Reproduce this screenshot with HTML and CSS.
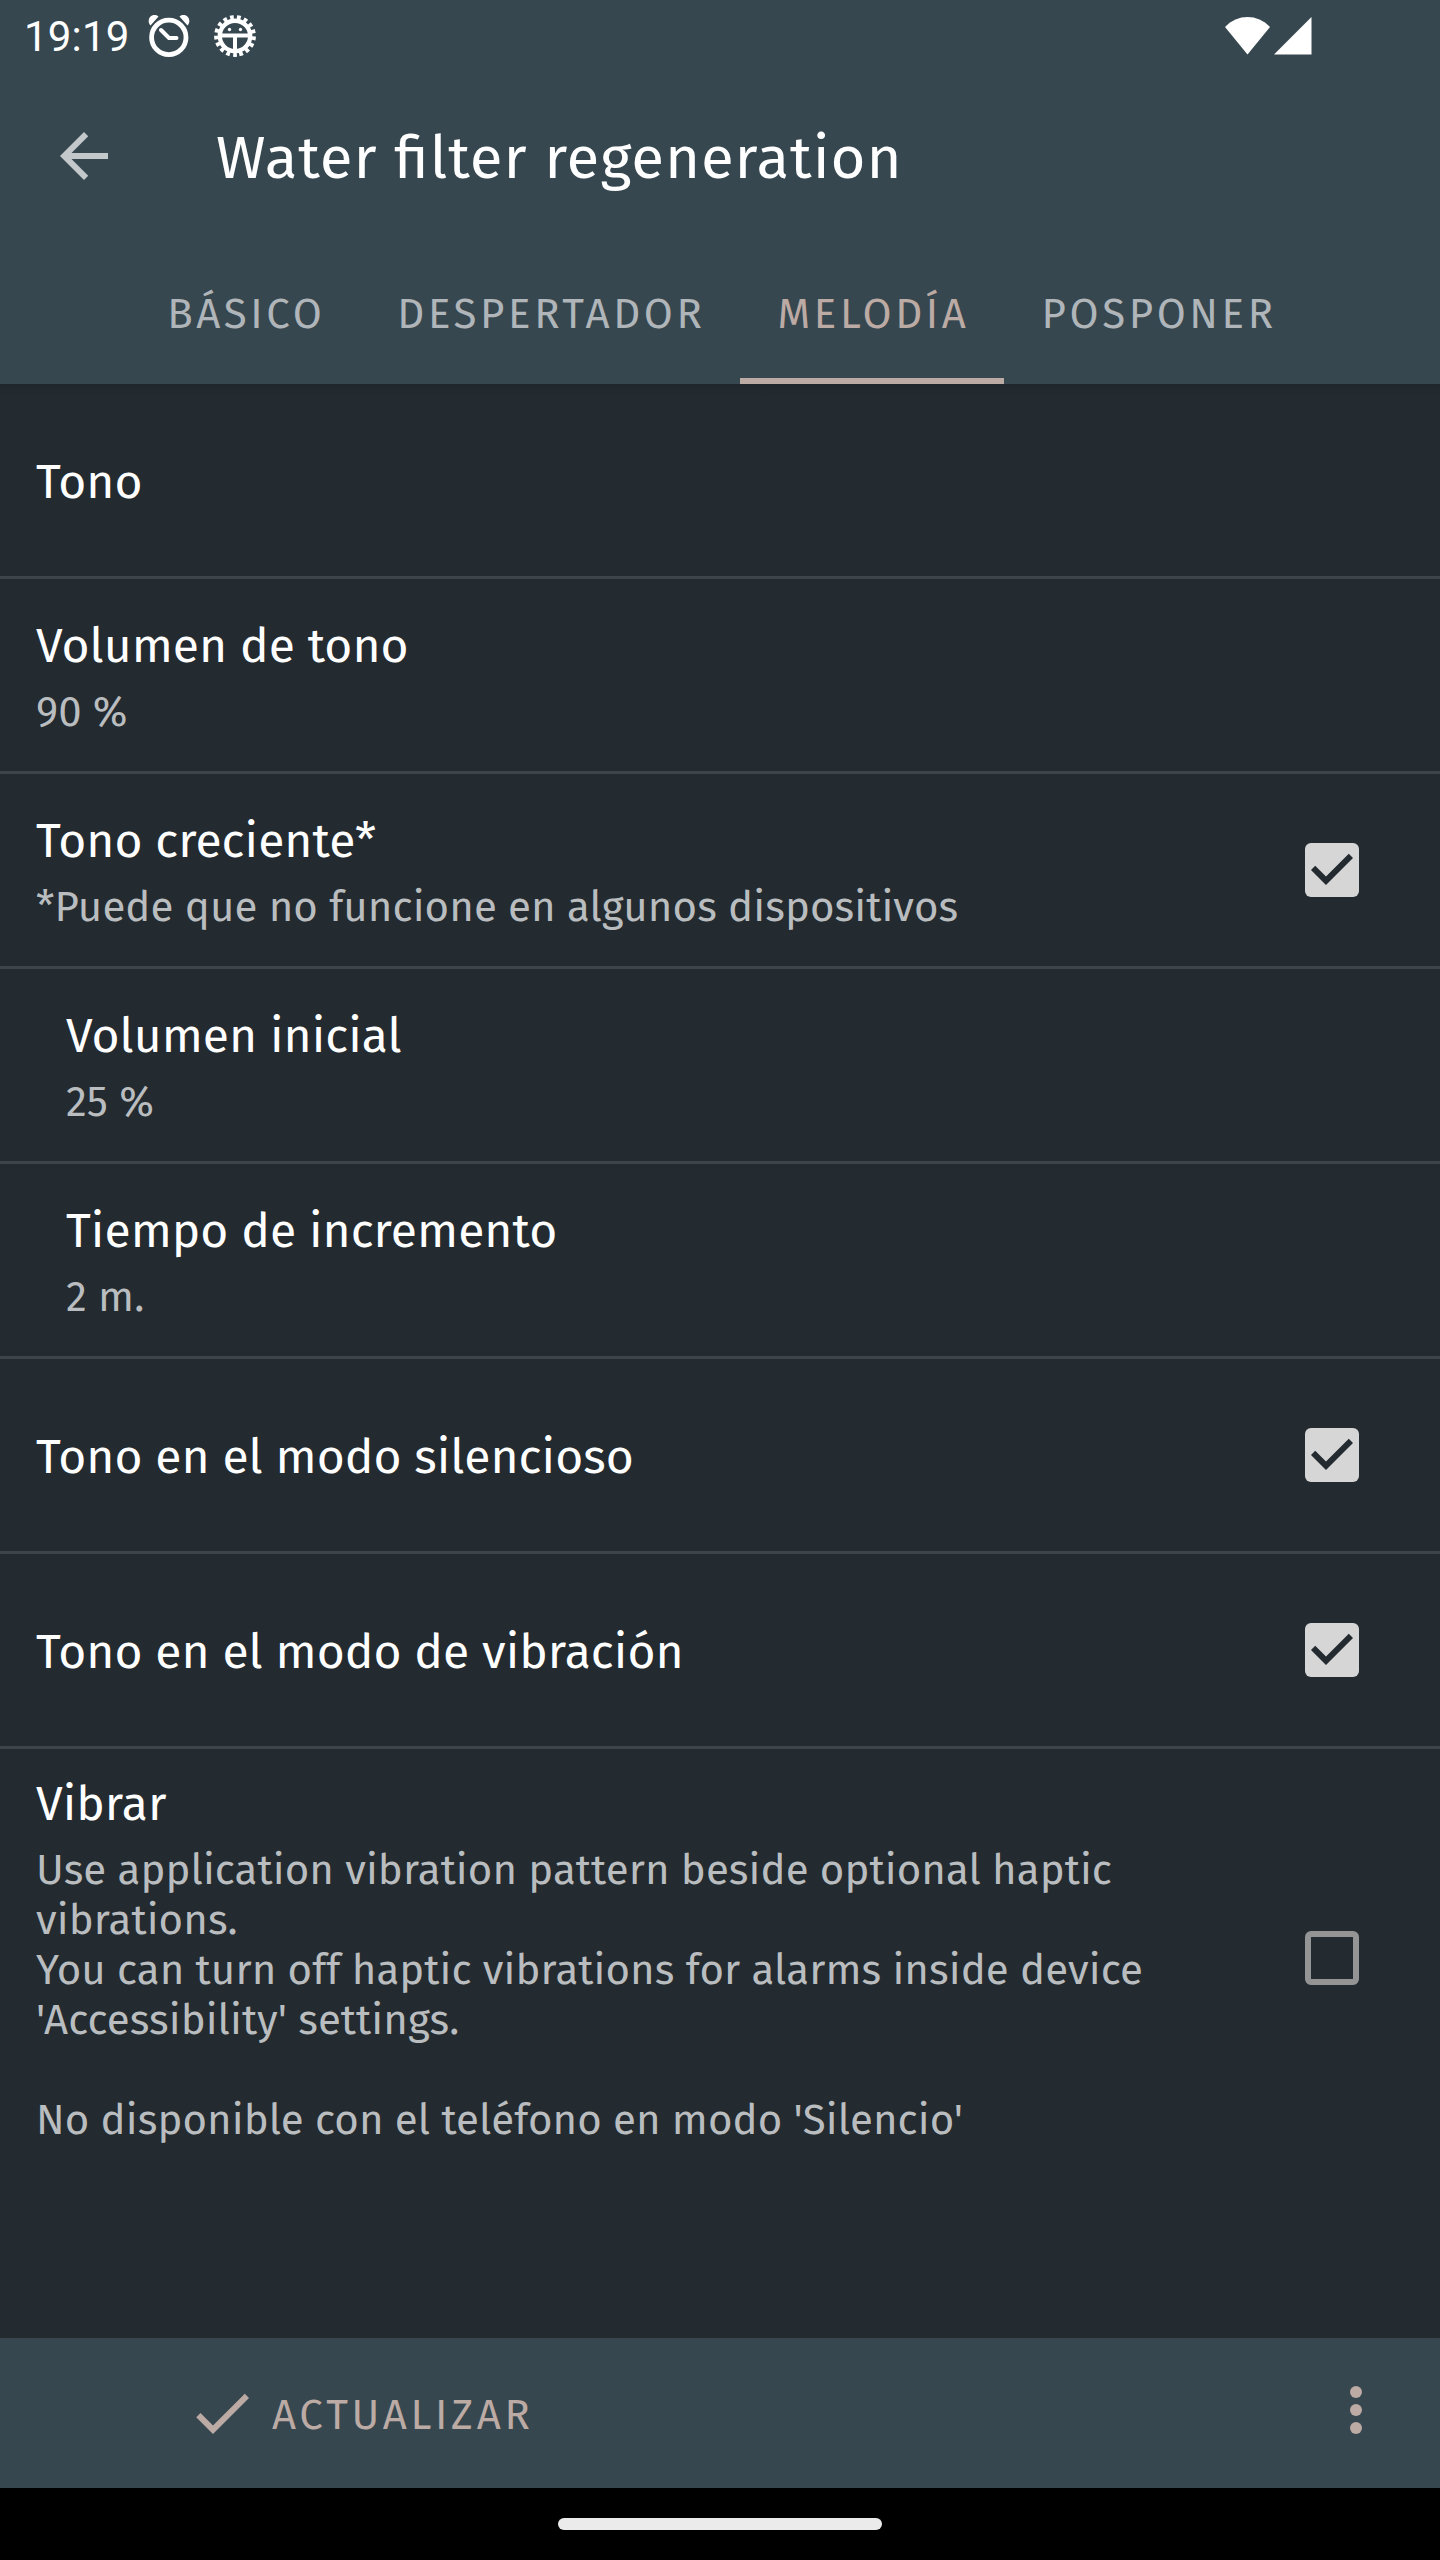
FILE: index.html
```html
<!DOCTYPE html>
<html lang="es">
<head>
    <meta charset="UTF-8">
    <meta name="viewport" content="width=device-width, initial-scale=1.0">
    <title>Water filter regeneration</title>
    <link rel="stylesheet" href="styles.css">
</head>
<body>

<div class="screen">
    <header class="header">
        <div class="status-bar">
            <span class="clock">19:19</span>
            <svg class="status-icon" width="42" height="42" viewBox="0 0 42 42" fill="none" stroke="#fff">
                <circle cx="20.800" cy="22.400" r="17.200" stroke-width="4.800"/>
                <path d="M13 15l8 8h7.500" stroke-width="4" stroke-linecap="round"/>
                <path d="M2.500 10.500C-3 4 5-3.500 10.500 1.500Q7 5.500 2.500 10.500zM39.500 10.500C45 4 37-3.500 31.500 1.500Q35 5.500 39.500 10.500z" fill="#fff" stroke="none"/>
            </svg>
            <svg class="status-icon gear" width="42" height="42" viewBox="-21 -21 42 42" fill="none" stroke="#fff">
                <circle r="15.200" stroke-width="4.400"/>
                <circle r="18.600" stroke-width="4.600" stroke-dasharray="3.700 3.175" transform="rotate(84.300)"/>
                <path d="M-14-.500h28M0-.500v16" stroke-width="4"/>
                <circle cx="-5.500" cy="-6.500" r="1.700" fill="#fff" stroke="none"/>
                <circle cx="5.500" cy="-6.500" r="1.700" fill="#fff" stroke="none"/>
            </svg>
            <svg class="signal" width="87" height="38" viewBox="0 0 87 38" fill="#fff">
                <path d="M0 10C12.500-3.300 32.500-3.300 45 10L22.500 37.500z"/>
                <path d="M49 37.500L86.500 0V37.500z"/>
            </svg>
        </div>
        <div class="toolbar">
            <svg class="back" width="72" height="72" viewBox="0 0 24 24" fill="#c3c8ca">
                <path d="M20 11H7.830l5.590-5.590L12 4l-8 8 8 8 1.410-1.410L7.830 13H20v-2z"/>
            </svg>
            <h1>Water filter regeneration</h1>
        </div>
        <nav class="tabs">
            <a class="tab">BÁSICO</a>
            <a class="tab">DESPERTADOR</a>
            <a class="tab active">MELODÍA</a>
            <a class="tab">POSPONER</a>
        </nav>
    </header>

    <main class="list">
        <div class="row">
            <div class="text"><h2>Tono</h2></div>
        </div>
        <div class="row">
            <div class="text"><h2>Volumen de tono</h2><p>90 %</p></div>
        </div>
        <div class="row">
            <div class="text"><h2>Tono creciente*</h2><p>*Puede que no funcione en algunos dispositivos</p></div>
            <svg class="checkbox" width="54" height="54" viewBox="3 3 18 18">
                <rect x="3" y="3" width="18" height="18" rx="2" fill="#d6d6d6"/>
                <path d="M10 17l-5-5 1.410-1.410L10 14.170l7.590-7.590L19 8z" fill="#232b30"/>
            </svg>
        </div>
        <div class="row indent">
            <div class="text"><h2>Volumen inicial</h2><p>25 %</p></div>
        </div>
        <div class="row indent">
            <div class="text"><h2>Tiempo de incremento</h2><p>2 m.</p></div>
        </div>
        <div class="row">
            <div class="text"><h2>Tono en el modo silencioso</h2></div>
            <svg class="checkbox" width="54" height="54" viewBox="3 3 18 18">
                <rect x="3" y="3" width="18" height="18" rx="2" fill="#d6d6d6"/>
                <path d="M10 17l-5-5 1.410-1.410L10 14.170l7.590-7.590L19 8z" fill="#232b30"/>
            </svg>
        </div>
        <div class="row">
            <div class="text"><h2>Tono en el modo de vibración</h2></div>
            <svg class="checkbox" width="54" height="54" viewBox="3 3 18 18">
                <rect x="3" y="3" width="18" height="18" rx="2" fill="#d6d6d6"/>
                <path d="M10 17l-5-5 1.410-1.410L10 14.170l7.590-7.590L19 8z" fill="#232b30"/>
            </svg>
        </div>
        <div class="row tall">
            <div class="text">
                <h2>Vibrar</h2>
                <p>Use application vibration pattern beside optional haptic<br>vibrations.<br>You can turn off haptic vibrations for alarms inside device<br>'Accessibility' settings.<br><br>No disponible con el teléfono en modo 'Silencio'</p>
            </div>
            <svg class="checkbox" width="54" height="54" viewBox="3 3 18 18">
                <rect x="4" y="4" width="16" height="16" rx="1" fill="none" stroke="#949494" stroke-width="2"/>
            </svg>
        </div>
    </main>

    <footer class="bottom-bar">
        <button class="update">
            <svg width="72" height="72" viewBox="0 0 24 24" fill="#bcaaa4">
                <path d="M9 16.170L4.830 12l-1.420 1.410L9 19 21 7l-1.410-1.410z"/>
            </svg>
            <span>ACTUALIZAR</span>
        </button>
        <svg class="more" width="72" height="72" viewBox="0 0 24 24" fill="#bcaaa4">
            <circle cx="12" cy="6" r="2"/>
            <circle cx="12" cy="12" r="2"/>
            <circle cx="12" cy="18" r="2"/>
        </svg>
    </footer>
    <div class="nav-bar"><div class="pill"></div></div>
</div>

</body>
</html>
```
FILE: styles.css
```css
* {
    box-sizing: border-box;
}
body {
    margin: 0;
    background-color: #000;
    font-family: "Fira Sans", "Noto Sans", sans-serif;
}
h1, h2, p {
    margin: 0;
    font-weight: normal;
    font-feature-settings: "liga";
    white-space: nowrap;
}
svg {
    display: block;
    flex: none;
}
.screen {
    width: 1440px;
    height: 2560px;
    display: flex;
    flex-direction: column;
    background-color: #232b30;
    overflow: hidden;
}
.header {
    height: 384px;
    background-color: #37474f;
}
.status-bar {
    height: 72px;
    display: flex;
    align-items: center;
    padding: 0 128px 0 24px;
    color: #fff;
}
.clock {
    width: 124px;
    font-family: Roboto, sans-serif;
    font-size: 42px;
    line-height: 50px;
    letter-spacing: 0.2px;
    padding-top: 2px;
}
.gear {
    margin-left: 24px;
}
.signal {
    margin-left: auto;
}
.toolbar {
    height: 168px;
    display: flex;
    align-items: center;
    padding: 0 48px;
}
.back {
    margin-right: 96px;
}
h1 {
    color: #fff;
    font-size: 60px;
    line-height: 72px;
    letter-spacing: 0.9px;
    padding-top: 4px;
}
.tabs {
    height: 144px;
    display: flex;
    justify-content: center;
}
.tab {
    padding: 0 34px 0 38px;
    color: #afb5b9;
    font-size: 42px;
    line-height: 148px;
    letter-spacing: 3.6px;
}
.tab.active {
    height: 144px;
    color: #bcaaa4;
    box-shadow: inset 0 -6px #bcaaa4;
}
.list {
    flex: 1;
    background: linear-gradient(#1f272c, #232b30 12px);
}
.row {
    height: 195px;
    display: flex;
    align-items: center;
    justify-content: space-between;
    padding: 0 81px 0 36px;
    border-bottom: 3px solid #3d444a;
}
.row.indent {
    padding-left: 66px;
}
.row.tall {
    height: auto;
    padding-top: 22px;
    border-bottom: none;
}
.text {
    margin-top: 1px;
}
h2 {
    color: #fff;
    font-size: 48px;
    line-height: 64px;
    letter-spacing: 0.04px;
}
h2:only-child {
    padding-top: 3px;
}
p {
    color: #babdbf;
    font-size: 42px;
    line-height: 50px;
    letter-spacing: 0.08px;
    padding-top: 9px;
}
.bottom-bar {
    height: 150px;
    display: flex;
    align-items: center;
    justify-content: space-between;
    padding: 0 48px 0 186px;
    background-color: #37474f;
}
.update {
    display: flex;
    align-items: center;
    gap: 14px;
    padding: 0;
    border: none;
    background: none;
    color: #bcaaa4;
    font-family: inherit;
    font-size: 42px;
    line-height: 50px;
    letter-spacing: 3.7px;
}
.update span {
    padding-top: 4px;
}
.more {
    margin-bottom: 6px;
}
.nav-bar {
    height: 72px;
    display: flex;
    align-items: center;
    justify-content: center;
    background-color: #000;
}
.pill {
    width: 324px;
    height: 12px;
    border-radius: 6px;
    background-color: #ebebeb;
}
```
